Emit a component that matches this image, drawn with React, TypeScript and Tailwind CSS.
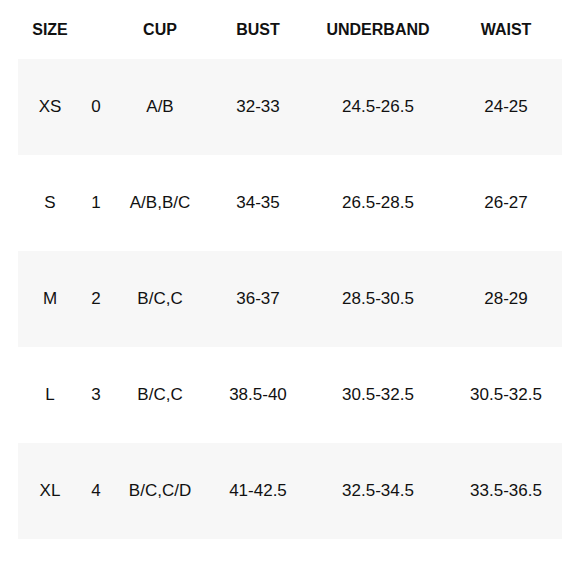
import React from 'react';

const rows = [
  { size: 'XS', num: '0', cup: 'A/B', bust: '32-33', underband: '24.5-26.5', waist: '24-25' },
  { size: 'S', num: '1', cup: 'A/B,B/C', bust: '34-35', underband: '26.5-28.5', waist: '26-27' },
  { size: 'M', num: '2', cup: 'B/C,C', bust: '36-37', underband: '28.5-30.5', waist: '28-29' },
  { size: 'L', num: '3', cup: 'B/C,C', bust: '38.5-40', underband: '30.5-32.5', waist: '30.5-32.5' },
  { size: 'XL', num: '4', cup: 'B/C,C/D', bust: '41-42.5', underband: '32.5-34.5', waist: '33.5-36.5' },
  { size: 'XXL', num: '5', cup: 'B/C,C/D', bust: '43-44.5', underband: '34.5-36.5', waist: '36.5-39.5' },
];

const cols = 'grid grid-cols-[64px_28px_100px_96px_144px_112px] items-center text-center';

export default function App() {
  return (
    <div className="h-[580px] w-[580px] overflow-hidden bg-white px-[18px] text-[#111] [font-family:'Liberation_Sans',Arial,sans-serif]">
      {/* Header */}
      <div className={`${cols} h-[59px] pt-[1px] text-[16px] font-bold`}>
        <div>SIZE</div>
        <div></div>
        <div>CUP</div>
        <div>BUST</div>
        <div>UNDERBAND</div>
        <div>WAIST</div>
      </div>

      {/* Rows */}
      {rows.map((r, i) => (
        <div
          key={r.size}
          className={`${cols} h-[96px] text-[17px] ${i % 2 === 0 ? 'bg-[#f7f7f7]' : 'bg-white'}`}
        >
          <div>{r.size}</div>
          <div>{r.num}</div>
          <div>{r.cup}</div>
          <div>{r.bust}</div>
          <div>{r.underband}</div>
          <div>{r.waist}</div>
        </div>
      ))}
    </div>
  );
}
